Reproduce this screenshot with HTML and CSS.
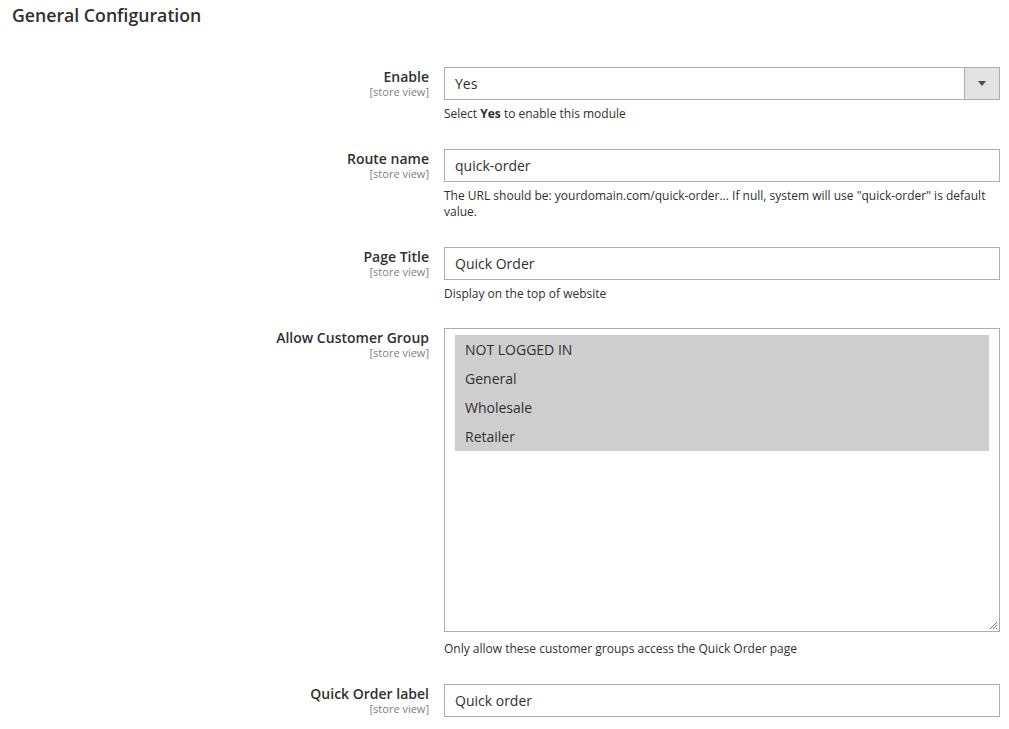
FILE: index.html
```html
<!DOCTYPE html>
<html lang="en">
<head>
<meta charset="utf-8">
<title>General Configuration</title>
<link rel="stylesheet" href="styles.css">
</head>
<body>
<div class="page">
  <h2 class="section-title">General Configuration</h2>
  <div class="form">
    <div class="row">
      <div class="label"><span class="label-text">Enable</span><span class="scope">[store view]</span></div>
      <div class="field">
        <div class="select">
          <span class="select-value">Yes</span>
          <span class="select-arrow"><span class="tri"></span></span>
        </div>
        <p class="note">Select <b>Yes</b> to enable this module</p>
      </div>
    </div>
    <div class="row">
      <div class="label"><span class="label-text">Route name</span><span class="scope">[store view]</span></div>
      <div class="field">
        <div class="input">quick-order</div>
        <p class="note">The URL should be: yourdomain.com/quick-order... If null, system will use "quick-order" is default value.</p>
      </div>
    </div>
    <div class="row row-tight">
      <div class="label"><span class="label-text">Page Title</span><span class="scope">[store view]</span></div>
      <div class="field">
        <div class="input">Quick Order</div>
        <p class="note">Display on the top of website</p>
      </div>
    </div>
    <div class="row">
      <div class="label"><span class="label-text">Allow Customer Group</span><span class="scope">[store view]</span></div>
      <div class="field">
        <div class="multiselect">
          <div class="option">NOT LOGGED IN</div>
          <div class="option">General</div>
          <div class="option">Wholesale</div>
          <div class="option">Retailer</div>
          <svg class="grip" width="10" height="10" viewBox="0 0 10 10"><path d="M9 2 L2 9 M9 5 L5 9 M9 8 L8 9" stroke="#777" stroke-width="1" fill="none"/></svg>
        </div>
        <p class="note note-ms">Only allow these customer groups access the Quick Order page</p>
      </div>
    </div>
    <div class="row">
      <div class="label"><span class="label-text">Quick Order label</span><span class="scope">[store view]</span></div>
      <div class="field">
        <div class="input">Quick order</div>
      </div>
    </div>
  </div>
</div>
</body>
</html>
```
FILE: styles.css
```css
html, body {
  margin: 0;
  padding: 0;
  background: #ffffff;
}
body {
  font-family: "Open Sans", "Noto Sans", sans-serif;
  color: #303030;
  overflow: hidden;
}
.page {
  padding: 0 9px 0 12px;
}
.section-title {
  margin: 0;
  padding-top: 4px;
  font-size: 17.7px;
  line-height: 22px;
  font-weight: 600;
  color: #303030;
}
.form {
  padding-top: 41px;
}
.row {
  display: flex;
  gap: 15px;
  margin-bottom: 27px;
}
.row-tight {
  margin-bottom: 26px;
}
.label {
  width: 417px;
  flex: none;
  display: flex;
  flex-direction: column;
  align-items: flex-end;
  padding-top: 1px;
}
.label-text {
  font-size: 14px;
  line-height: 18px;
  font-weight: 600;
  color: #303030;
}
.scope {
  font-size: 11px;
  line-height: 11px;
  color: #808080;
}
.field {
  width: 556px;
  flex: none;
}
.input, .select {
  box-sizing: border-box;
  height: 33px;
  border: 1px solid #adadad;
  font-size: 14px;
  line-height: 31px;
  padding-left: 10px;
  color: #303030;
}
.select {
  display: flex;
  justify-content: space-between;
}
.select-arrow {
  width: 34px;
  border-left: 1px solid #adadad;
  background: #e3e3e3;
  display: flex;
  align-items: center;
  justify-content: center;
}
.tri {
  width: 0;
  height: 0;
  border-left: 4px solid transparent;
  border-right: 4px solid transparent;
  border-top: 5px solid #514943;
}
.note {
  margin: 6px 0 0;
  font-size: 12px;
  line-height: 16px;
  color: #303030;
}
.note b {
  font-weight: 700;
}
.multiselect {
  position: relative;
  box-sizing: border-box;
  height: 304px;
  border: 1px solid #adadad;
  padding: 6px 10px 0 10px;
}
.option {
  background: #cecece;
  height: 29px;
  line-height: 29px;
  padding-left: 10px;
  font-size: 14px;
  color: #303030;
}
.grip {
  position: absolute;
  right: 1px;
  bottom: 1px;
}
.note-ms {
  margin-top: 9px;
}
```
